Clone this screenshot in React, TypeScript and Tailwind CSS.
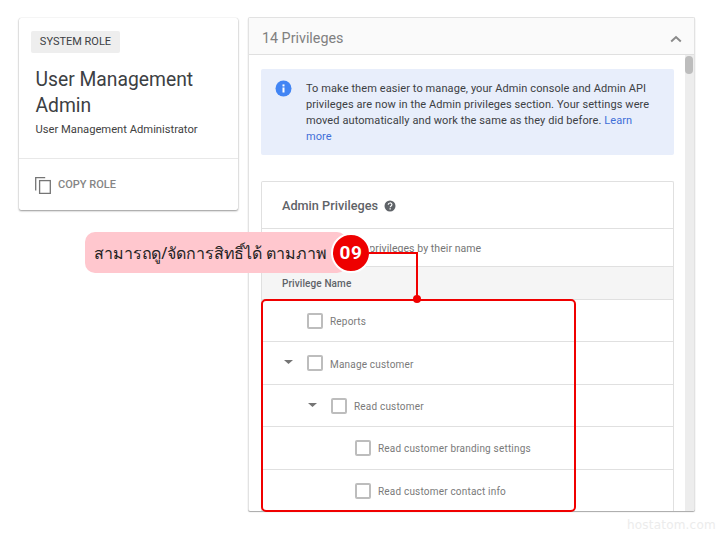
import React from "react";

const F = "font-['Roboto','Liberation_Sans',sans-serif]";

function Check() {
  return <span className="block w-4 h-4 shrink-0 border-2 border-[#bdbdbd] rounded-[2px] bg-white box-border" />;
}

function Arrow() {
  return (
    <svg width="9" height="4" viewBox="0 0 9 4" className="shrink-0">
      <path d="M0 0h9L4.5 4z" fill="#757575" />
    </svg>
  );
}

function Row({ label, indent, arrow, h, drop }: { label: string; indent: number; arrow?: boolean; h: string; drop?: boolean }) {
  return (
    <div className={`flex items-center border-t border-[#e0e0e0] ${h}`}>
      <div style={{ width: indent }} className="shrink-0 flex justify-end pr-[14px] pb-[2px]">
        {arrow ? <Arrow /> : null}
      </div>
      <Check />
      <span className={`ml-[7px] text-[10px] tracking-[0.19px] text-[#7a7a7a] ${drop ? "pt-[2px]" : ""}`}>{label}</span>
    </div>
  );
}

export default function App() {
  return (
    <div className={`relative w-[720px] h-[533px] overflow-hidden bg-white ${F}`}>
      <div className="flex items-start gap-[10px] pl-[19px] pt-[17px]">
        <div className="mt-[1px] w-[219px] h-[192px] bg-white rounded-[2px] shadow-[0_1px_2px_rgba(0,0,0,0.4),0_0_1px_rgba(0,0,0,0.2)] flex flex-col">
          <div className="flex-1 pl-[12px] pt-[13px]">
            <div className="w-[89px] h-[22px] leading-[22px] text-center bg-[#eeeeee] rounded-[2px] text-[11px] text-[#3c4043]">SYSTEM ROLE</div>
            <div className="mt-[14px] pl-[4.5px] text-[19.3px] leading-[26px] text-[#3c4043]">User Management<br />Admin</div>
            <div className="mt-[3px] pl-[4.5px] text-[11.2px] leading-[16px] text-[#424242]">User Management Administrator</div>
          </div>
          <div className="h-[52px] border-t border-[#e8e8e8] flex items-center pl-[16px] gap-[7px] pt-[1px]">
            <svg width="16" height="17" viewBox="0 0 16 17" fill="none" stroke="#757575" strokeWidth="1.3">
              <path d="M.7 13.5V.7h9.5" />
              <rect x="4.6" y="3.6" width="10.7" height="12.8" />
            </svg>
            <span className="text-[11px] font-medium text-[#858585]">COPY ROLE</span>
          </div>
        </div>

        <div className="w-[447px] h-[494px] bg-white rounded-[2px] border-x border-t border-[#e2e2e2] shadow-[0_1px_1px_rgba(0,0,0,0.35)] flex flex-col">
          <div className="h-[37px] shrink-0 bg-[#fafafa] border-b border-[#e0e0e0] flex items-center justify-between pl-[13px] pr-[12px] pt-[5px]">
            <span className="text-[14.3px] text-[#808080]">14 Privileges</span>
            <svg width="12" height="8" viewBox="0 0 12 8" fill="none" stroke="#8a8a8a" strokeWidth="2">
              <path d="M1.2 6.5 6 2l4.8 4.5" />
            </svg>
          </div>
          <div className="flex-1 flex min-h-0">
            <div className="flex-1 min-w-0 pl-[12px] pr-[11px] pt-[14px]">
              <div className="h-[86px] bg-[#e8eefb] rounded-[2px] flex pl-[14px] pt-[12px]">
                <svg width="17" height="17" viewBox="0 0 17 17" className="-mt-[1px] shrink-0">
                  <circle cx="8.5" cy="8.5" r="8" fill="#4285f4" />
                  <rect x="7.5" y="7.5" width="2" height="5" fill="#fff" />
                  <rect x="7.5" y="4.4" width="2" height="2" fill="#fff" />
                </svg>
                <div className="ml-[14px] text-[11px] leading-[16px] tracking-[0.09px] text-[#3c4043] w-[350px]">
                  To make them easier to manage, your Admin console and Admin API privileges are now in the Admin privileges section. Your settings were moved automatically and work the same as they did before. <span className="text-[#3f6fd8]">Learn more</span>
                </div>
              </div>
              <div className="mt-[26px] border-x border-t border-[#e0e0e0] rounded-t-[2px]">
                <div className="h-[46px] flex items-center pl-[20px] gap-[6px] pt-[1px]">
                  <span className="text-[12.7px] font-medium text-[#5f6368]">Admin Privileges</span>
                  <svg width="12" height="12" viewBox="0 0 12 12">
                    <circle cx="6" cy="6" r="5.5" fill="#5f6368" />
                    <path d="M4.2 4.8c0-2.4 3.7-2.4 3.7-.2 0 1.3-1.7 1.4-1.7 2.7" fill="none" stroke="#fff" strokeWidth="1.2" />
                    <rect x="5.5" y="8.2" width="1.3" height="1.3" fill="#fff" />
                  </svg>
                </div>
                <div className="h-[38px] border-t border-[#e0e0e0] flex items-center pl-[20px] pt-[2px] text-[10.5px] tracking-[0.06px] text-[#757575]">
                  <span className="pl-[36px]">Search for privileges by their name</span>
                </div>
                <div className="h-[33px] bg-[#f5f5f5] border-t border-[#e0e0e0] flex items-center pl-[20px] text-[10px] font-medium tracking-[0.1px] text-[#5f6368]">Privilege Name</div>
                <Row label="Reports" indent={45} h="h-[42px]" drop />
                <Row label="Manage customer" indent={45} arrow h="h-[43px]" drop />
                <Row label="Read customer" indent={69} arrow h="h-[42px]" drop />
                <Row label="Read customer branding settings" indent={93} h="h-[43px]" />
                <Row label="Read customer contact info" indent={93} h="h-[42px]" drop />
              </div>
            </div>
            <div className="w-[9px] shrink-0 bg-[#ededed]">
              <div className="w-[8px] h-[18px] mt-[1px] bg-[#bdbdbd] rounded-[4px]" />
            </div>
          </div>
        </div>
      </div>

      {/* annotation */}
      <div className="absolute left-[85px] top-[232px] w-[262px] h-[41px] rounded-[10px] bg-[#ffc7ce] flex items-center pl-[9px] text-[16px] tracking-[-0.1px] text-[#222] font-['Noto_Sans','DejaVu_Sans',sans-serif] whitespace-nowrap">
        สามารถดู/จัดการสิทธิ์ได้ ตามภาพ
      </div>
      <div className="absolute left-[331px] top-[233px] w-[40px] h-[40px] rounded-full bg-[#ee0000] border-2 border-white flex items-center justify-center text-[19px] font-bold tracking-[0.5px] text-white">
        09
      </div>
      <div className="absolute left-[369px] top-[252px] w-[49px] h-[47px] border-t-2 border-r-2 border-[#f00000]" />
      <div className="absolute left-[261px] top-[299px] w-[315px] h-[213px] border-2 border-[#f00000] rounded-[5px]" />
      <div className="absolute left-[413px] top-[295px] w-[8px] h-[8px] rounded-full bg-[#f00000]" />
      <div className="absolute left-[627px] top-[516px] text-[12px] tracking-[0.2px] text-[#ececec] font-['DejaVu_Sans',sans-serif]">hostatom.com</div>
    </div>
  );
}
